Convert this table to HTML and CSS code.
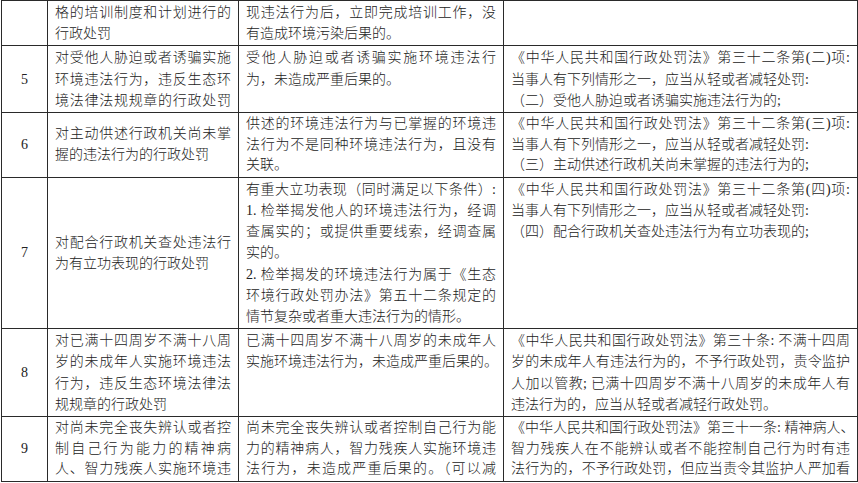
FILE: index.html
```html
<!DOCTYPE html>
<html lang="zh-CN">
<head>
<meta charset="utf-8">
<title>生态环境行政处罚 从轻减轻情形</title>
<link rel="stylesheet" href="styles.css">
</head>
<body>
<table class="grid">
  <colgroup>
    <col class="c-no">
    <col class="c-case">
    <col class="c-cond">
    <col class="c-law">
  </colgroup>
  <tbody>
    <tr>
      <td class="no"></td>
      <td class="case"><span class="ln">格的培训制度和计划进行的</span><span class="ln end">行政处罚</span></td>
      <td class="cond"><span class="ln">现违法行为后，立即完成培训工作，没</span><span class="ln end">有造成环境污染后果的。</span></td>
      <td class="law"></td>
    </tr>
    <tr>
      <td class="no">5</td>
      <td class="case"><span class="ln">对受他人胁迫或者诱骗实施</span><span class="ln">环境违法行为，违反生态环</span><span class="ln">境法律法规规章的行政处罚</span></td>
      <td class="cond"><span class="ln">受他人胁迫或者诱骗实施环境违法行</span><span class="ln end">为，未造成严重后果的。</span></td>
      <td class="law"><span class="ln">《中华人民共和国行政处罚法》第三十二条第(二)项:</span><span class="ln end">当事人有下列情形之一，应当从轻或者减轻处罚:</span><span class="ln end">（二）受他人胁迫或者诱骗实施违法行为的;</span></td>
    </tr>
    <tr class="tight">
      <td class="no">6</td>
      <td class="case"><span class="ln">对主动供述行政机关尚未掌</span><span class="ln end">握的违法行为的行政处罚</span></td>
      <td class="cond"><span class="ln">供述的环境违法行为与已掌握的环境违</span><span class="ln">法行为不是同种环境违法行为，且没有</span><span class="ln end">关联。</span></td>
      <td class="law"><span class="ln">《中华人民共和国行政处罚法》第三十二条第(三)项:</span><span class="ln end">当事人有下列情形之一，应当从轻或者减轻处罚:</span><span class="ln end">（三）主动供述行政机关尚未掌握的违法行为的;</span></td>
    </tr>
    <tr>
      <td class="no">7</td>
      <td class="case"><span class="ln">对配合行政机关查处违法行</span><span class="ln end">为有立功表现的行政处罚</span></td>
      <td class="cond"><span class="ln">有重大立功表现（同时满足以下条件）:</span><span class="ln">1. 检举揭发他人的环境违法行为，经调</span><span class="ln">查属实的；或提供重要线索，经调查属</span><span class="ln end">实的。</span><span class="ln">2. 检举揭发的环境违法行为属于《生态</span><span class="ln">环境行政处罚办法》第五十二条规定的</span><span class="ln end">情节复杂或者重大违法行为的情形。</span></td>
      <td class="law"><span class="ln">《中华人民共和国行政处罚法》第三十二条第(四)项:</span><span class="ln end">当事人有下列情形之一，应当从轻或者减轻处罚:</span><span class="ln end">（四）配合行政机关查处违法行为有立功表现的;</span></td>
    </tr>
    <tr>
      <td class="no">8</td>
      <td class="case"><span class="ln">对已满十四周岁不满十八周</span><span class="ln">岁的未成年人实施环境违法</span><span class="ln">行为，违反生态环境法律法</span><span class="ln end">规规章的行政处罚</span></td>
      <td class="cond"><span class="ln">已满十四周岁不满十八周岁的未成年人</span><span class="ln end">实施环境违法行为，未造成严重后果的。</span></td>
      <td class="law"><span class="ln">《中华人民共和国行政处罚法》第三十条: 不满十四周</span><span class="ln">岁的未成年人有违法行为的，不予行政处罚，责令监护</span><span class="ln">人加以管教; 已满十四周岁不满十八周岁的未成年人有</span><span class="ln end">违法行为的，应当从轻或者减轻行政处罚。</span></td>
    </tr>
    <tr class="tight">
      <td class="no">9</td>
      <td class="case"><span class="ln">对尚未完全丧失辨认或者控</span><span class="ln">制自己行为能力的精神病</span><span class="ln">人、智力残疾人实施环境违</span></td>
      <td class="cond"><span class="ln">尚未完全丧失辨认或者控制自己行为能</span><span class="ln">力的精神病人，智力残疾人实施环境违</span><span class="ln">法行为，未造成严重后果的。（可以减</span></td>
      <td class="law"><span class="ln">《中华人民共和国行政处罚法》第三十一条: 精神病人、</span><span class="ln">智力残疾人在不能辨认或者不能控制自己行为时有违</span><span class="ln">法行为的，不予行政处罚，但应当责令其监护人严加看</span></td>
    </tr>
  </tbody>
</table>
</body>
</html>
```

FILE: styles.css
```css
html, body {
  margin: 0;
  padding: 0;
  background: #ffffff;
}

body {
  width: 858px;
  height: 483px;
  overflow: hidden;
  padding-left: 1px;
  box-sizing: border-box;
}

.grid {
  border-collapse: collapse;
  table-layout: fixed;
  width: 856px;
  font-family: "Liberation Serif", "Noto Sans CJK SC", serif;
  font-size: 14px;
  font-weight: 300;
  line-height: 21.2px;
  color: #222222;
}

.c-no { width: 46px; }
.c-case { width: 191px; }
.c-cond { width: 265px; }
.c-law { width: 354px; }

.grid td {
  border: 1px solid #2a2a2a;
  padding: 1px 7px;
  vertical-align: top;
}

.grid tr.tight td {
  line-height: 20.6px;
}

.grid td.no {
  text-align: center;
  vertical-align: middle;
  padding: 0;
}

.grid td.case {
  vertical-align: middle;
}

.ln {
  display: block;
  white-space: nowrap;
  text-align: justify;
  text-align-last: justify;
}

.ln.end {
  text-align-last: left;
}
```
